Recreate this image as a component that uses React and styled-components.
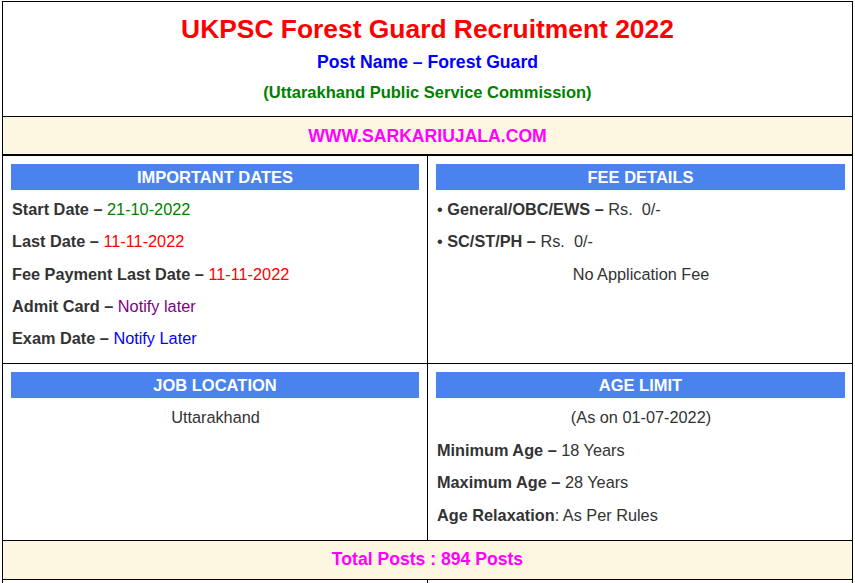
import React from "react";
import styled, { createGlobalStyle } from "styled-components";

const GlobalStyle = createGlobalStyle`
	body {
		margin: 0;
		background: #fff;
		font-family: "Liberation Sans", Arial, sans-serif;
		color: #333;
	}
`;

const dates = [
	{ label: "Start Date", value: "21-10-2022", color: "#008000" },
	{ label: "Last Date", value: "11-11-2022", color: "#ff0000" },
	{ label: "Fee Payment Last Date", value: "11-11-2022", color: "#ff0000" },
	{ label: "Admit Card", value: "Notify later", color: "#800080" },
	{ label: "Exam Date", value: "Notify Later", color: "#0000ff" },
];

export default function App() {
	return (
		<>
			<GlobalStyle />
			<Table>
				<Header>
					<Title>UKPSC Forest Guard Recruitment 2022</Title>
					<PostName>Post Name – Forest Guard</PostName>
					<Org>(Uttarakhand Public Service Commission)</Org>
				</Header>
				<Highlight $thick>WWW.SARKARIUJALA.COM</Highlight>
				<Row>
					<Cell>
						<Bar>IMPORTANT DATES</Bar>
						{dates.map((d) => (
							<Line key={d.label}>
								<b>{d.label} – </b>
								<Value $color={d.color}>{d.value}</Value>
							</Line>
						))}
					</Cell>
					<Cell>
						<Bar>FEE DETAILS</Bar>
						<Line>
							• <b>General/OBC/EWS – </b>Rs.&nbsp; 0/-
						</Line>
						<Line>
							• <b>SC/ST/PH – </b>Rs.&nbsp; 0/-
						</Line>
						<Line $center>No Application Fee</Line>
					</Cell>
				</Row>
				<Row>
					<Cell>
						<Bar>JOB LOCATION</Bar>
						<Line $center>Uttarakhand</Line>
					</Cell>
					<Cell>
						<Bar>AGE LIMIT</Bar>
						<Line $center>(As on 01-07-2022)</Line>
						<Line>
							<b>Minimum Age – </b>18 Years
						</Line>
						<Line>
							<b>Maximum Age – </b>28 Years
						</Line>
						<Line>
							<b>Age Relaxation</b>: As Per Rules
						</Line>
					</Cell>
				</Row>
				<Highlight $low>Total Posts : 894 Posts</Highlight>
				<Row>
					<Cell $tall />
					<Cell $tall />
				</Row>
			</Table>
		</>
	);
}

const Table = styled.div`
	margin: 1px 2px 0 2px;
	border: 1px solid #000;
	border-bottom: none;
	width: 849px;
`;
const Header = styled.div`
	display: flex;
	flex-direction: column;
	align-items: center;
	padding: 11px 8px 12px;
	border-bottom: 1px solid #000;
	font-weight: 700;
`;
const Title = styled.div`
	font-size: 26.4px;
	line-height: 32px;
	color: #ff0000;
`;
const PostName = styled.div`
	font-size: 17.6px;
	line-height: 26px;
	margin-top: 4px;
	color: #0000ff;
`;
const Org = styled.div`
	font-size: 16.5px;
	line-height: 24px;
	margin-top: 5px;
	color: #008000;
`;
const Highlight = styled.div`
	background: #fdf6e0;
	color: #ff00ff;
	font-weight: 700;
	font-size: 17.6px;
	line-height: 24px;
	text-align: center;
	padding: ${(p) => (p.$low ? "6px 8px 8px" : "7px 8px 6px")};
	border-bottom: ${(p) => (p.$thick ? "2px" : "1px")} solid #000;
`;
const Row = styled.div`
	display: grid;
	grid-template-columns: 425px 1fr;
	border-bottom: 1px solid #000;
`;
const Cell = styled.div`
	display: flex;
	flex-direction: column;
	gap: 8.4px;
	padding: 8px 8px 13px;
	min-height: ${(p) => (p.$tall ? "60px" : "0")};
	&:first-child {
		border-right: 1px solid #000;
	}
	& + & {
		padding-right: 7px;
	}
`;
const Bar = styled.div`
	background: #4a83ee;
	color: #fff;
	font-weight: 700;
	font-size: 16.5px;
	line-height: 26px;
	text-align: center;
	margin-bottom: -1.5px;
`;
const Line = styled.div`
	font-size: 16.3px;
	line-height: 24px;
	padding-left: 1px;
	text-align: ${(p) => (p.$center ? "center" : "left")};
	b {
		font-weight: 700;
	}
`;
const Value = styled.span`
	color: ${(p) => p.$color};
`;
